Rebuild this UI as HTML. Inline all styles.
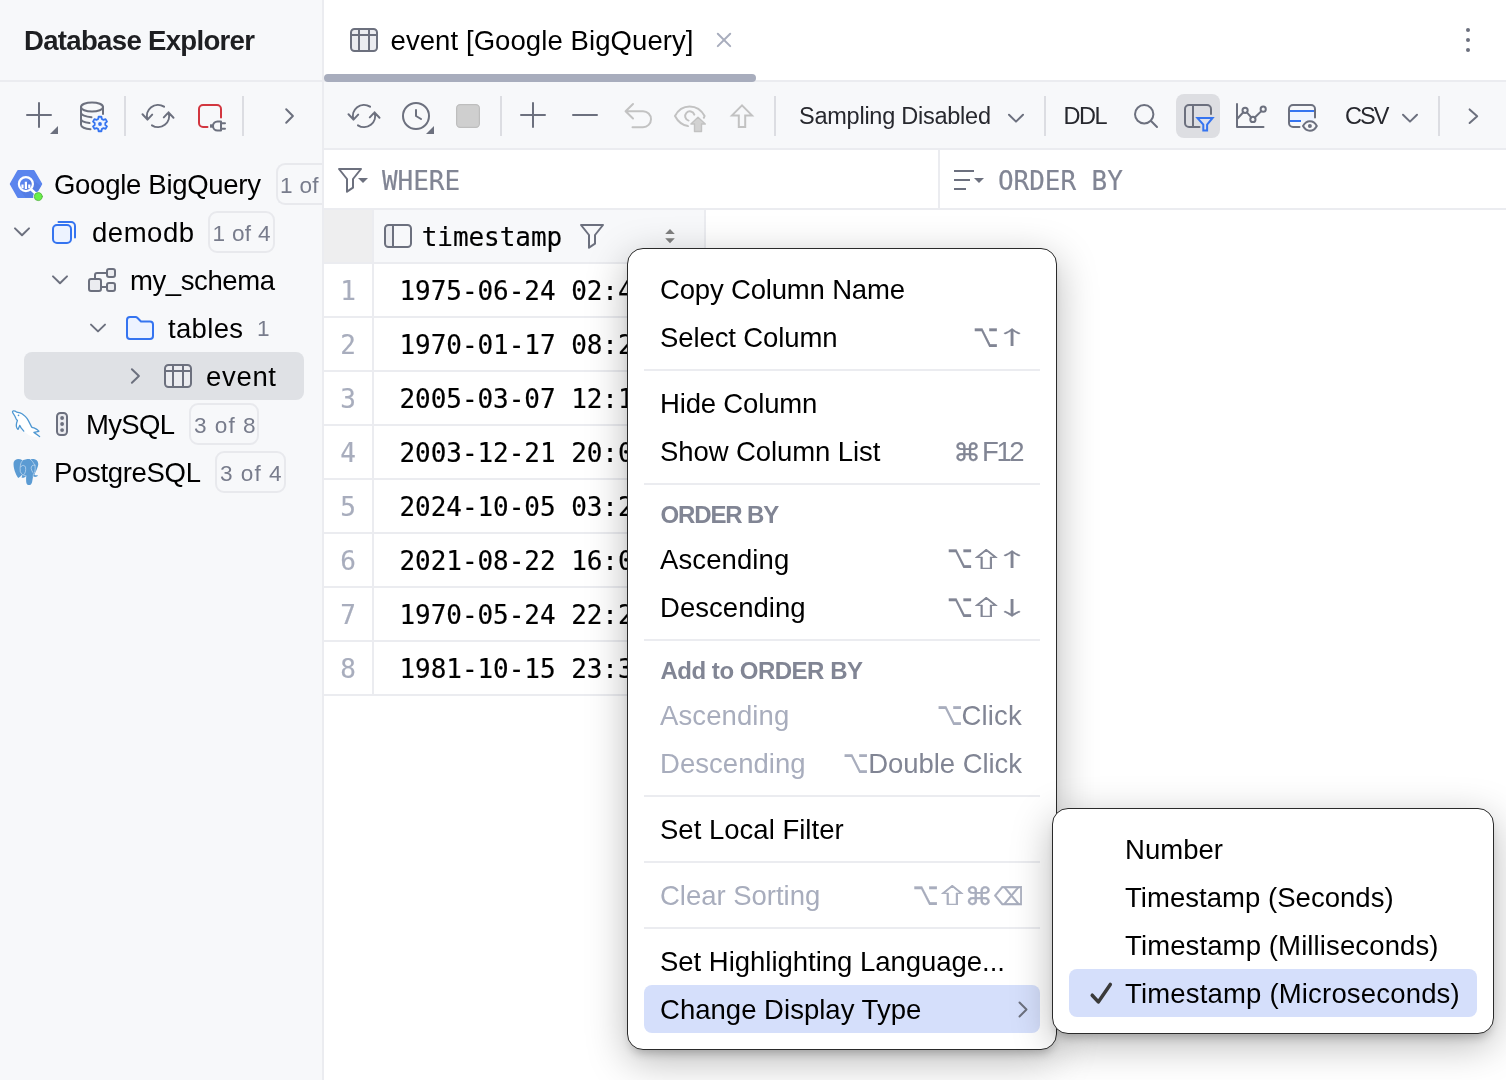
<!DOCTYPE html>
<html lang="en"><head><meta charset="utf-8"><title>Database Explorer</title>
<style>
*{box-sizing:border-box;margin:0;padding:0}
html,body{width:1506px;height:1080px;overflow:hidden;background:#fff}
body{font-family:"Liberation Sans","DejaVu Sans",sans-serif;font-size:27.5px;color:#000;position:relative;will-change:transform}
.a{position:absolute}
.t{position:absolute;white-space:nowrap;line-height:48px;height:48px;margin-top:1px}
.t.mono{margin-top:0}
.mono{font-family:"DejaVu Sans Mono","Liberation Mono",monospace;font-size:26px;letter-spacing:-0.05px;-webkit-text-stroke:0.18px currentColor}
.sym{font-family:"DejaVu Sans","Liberation Sans",sans-serif}
.gray{color:#818594}
.dis{color:#a8adbd}
.line{position:absolute;background:#ebecf0}
svg{position:absolute;left:0;top:0;overflow:visible}
.badge{position:absolute;height:42px;border:2px solid #e8e9ed;border-radius:9px}
.bt{position:absolute;white-space:nowrap;line-height:48px;height:48px;font-size:22.6px;color:#787c8c;margin-top:1px}
.menu{position:absolute;background:#fff;border:1px solid #2a2a2a;border-radius:16px}
.mi{position:absolute;left:32px;margin-top:1px;white-space:nowrap;line-height:48px;height:48px}
.sc{position:absolute;margin-top:1px;white-space:nowrap;line-height:48px;height:48px;text-align:right;color:#818594}
.hd{position:absolute;left:32.5px;margin-top:1px;white-space:nowrap;line-height:42px;height:42px;font-weight:bold;font-size:24px;color:#818594}
.sep{position:absolute;left:16px;height:2px;background:#ebecf0}
.hl{position:absolute;left:16px;height:48px;background:#d5dffb;border-radius:8px}

</style></head><body>
<!-- ===== left panel ===== -->
<div class="a" style="left:0;top:0;width:322px;height:1080px;background:#f7f8fa"></div>
<div class="line" style="left:322px;top:0;width:2px;height:1080px"></div>
<div class="line" style="left:0;top:80px;width:322px;height:2px"></div>
<div class="t" style="left:24px;top:16px;font-weight:bold;font-size:27.6px;color:#1e1f22"><span id="t_dbx" style="letter-spacing:-0.708px;">Database Explorer</span></div>

<!-- tree selection -->
<div class="a" style="left:24px;top:352px;width:280px;height:48px;border-radius:8px;background:#dfe1e5"></div>

<!-- tree text -->
<div class="t" style="left:54px;top:160px"><span id="t_gbq" style="letter-spacing:-0.283px;">Google BigQuery</span></div>
<div class="t" style="left:92px;top:208px"><span id="t_demodb" style="letter-spacing:0.522px;">demodb</span></div>
<div class="t" style="left:130px;top:256px"><span id="t_schema" style="letter-spacing:-0.406px;">my_schema</span></div>
<div class="t" style="left:168px;top:304px"><span id="t_tables" style="letter-spacing:0.322px;">tables</span></div>
<div class="bt" style="left:257px;top:304px">1</div>
<div class="t" style="left:206px;top:352px"><span id="t_event" style="letter-spacing:0.680px;">event</span></div>
<div class="t" style="left:86px;top:400px"><span id="t_mysql" style="letter-spacing:-0.672px;">MySQL</span></div>
<div class="t" style="left:54px;top:448px"><span id="t_pg" style="letter-spacing:-0.312px;">PostgreSQL</span></div>

<!-- badges -->
<div class="badge" style="left:276px;top:163px;width:46px;border-right:none;border-radius:9px 0 0 9px"></div>
<div class="bt" style="left:280px;top:161px;width:41px;overflow:hidden"><span id="b_1" style="letter-spacing:0.294px;">1 of 4</span></div>
<div class="badge" style="left:208px;top:211px;width:67px"></div>
<div class="bt" style="left:212.5px;top:209px"><span id="b_2" style="letter-spacing:0.294px;">1 of 4</span></div>
<div class="badge" style="left:189px;top:403px;width:70px"></div>
<div class="bt" style="left:194px;top:401px"><span id="b_3" style="letter-spacing:0.994px;">3 of 8</span></div>
<div class="badge" style="left:215px;top:451px;width:71px"></div>
<div class="bt" style="left:220px;top:449px"><span id="b_4" style="letter-spacing:0.994px;">3 of 4</span></div>

<!-- ===== right panel ===== -->
<div class="line" style="left:324px;top:80px;width:1182px;height:2px"></div>
<div class="a" style="left:324px;top:74px;width:432px;height:8px;border-radius:4px;background:#a8adbd"></div>
<div class="t" style="left:390.5px;top:16px"><span id="t_tab" style="letter-spacing:0.084px;">event [Google BigQuery]</span></div>

<!-- toolbar -->
<div class="a" style="left:324px;top:82px;width:1182px;height:66px;background:#f7f8fa"></div>
<div class="line" style="left:324px;top:148px;width:1182px;height:2px"></div>
<div class="a" style="left:1176px;top:94px;width:44px;height:44px;border-radius:8px;background:#dddee2"></div>
<div class="t" style="left:799px;top:91px;font-size:23.5px;color:#27282e"><span id="t_samp" style="letter-spacing:-0.247px;">Sampling Disabled</span></div>
<div class="t" style="left:1063.5px;top:91px;font-size:23.5px;color:#27282e"><span id="t_ddl" style="letter-spacing:-1.514px;">DDL</span></div>
<div class="t" style="left:1345px;top:91px;font-size:23.5px;color:#27282e"><span id="t_csv" style="letter-spacing:-1.912px;">CSV</span></div>

<!-- filter row -->
<div class="line" style="left:324px;top:208px;width:1182px;height:2px"></div>
<div class="line" style="left:938px;top:150px;width:2px;height:58px"></div>
<div class="t mono" style="left:382px;top:157px;color:#818594">WHERE</div>
<div class="t mono" style="left:998px;top:157px;color:#818594">ORDER BY</div>

<!-- table header -->
<div class="a" style="left:324px;top:210px;width:48px;height:52px;background:#eeeeef"></div>
<div class="a" style="left:374px;top:210px;width:330px;height:52px;background:#f7f8fa"></div>
<div class="line" style="left:324px;top:262px;width:380px;height:2px"></div>
<div class="line" style="left:372px;top:210px;width:2px;height:486px"></div>
<div class="line" style="left:704px;top:210px;width:2px;height:54px"></div>
<div class="t mono" style="left:421.7px;top:213px">timestamp</div>

<!-- rows -->
<div class="line" style="left:324px;top:316px;width:380px;height:2px"></div><div class="t mono" style="left:324px;width:48px;text-align:center;top:267px;color:#a8adbd">1</div><div class="t mono" style="left:399.5px;top:267px;width:304px;overflow:hidden">1975-06-24 02:45:10.123456</div><div class="line" style="left:324px;top:370px;width:380px;height:2px"></div><div class="t mono" style="left:324px;width:48px;text-align:center;top:321px;color:#a8adbd">2</div><div class="t mono" style="left:399.5px;top:321px;width:304px;overflow:hidden">1970-01-17 08:26:44.482915</div><div class="line" style="left:324px;top:424px;width:380px;height:2px"></div><div class="t mono" style="left:324px;width:48px;text-align:center;top:375px;color:#a8adbd">3</div><div class="t mono" style="left:399.5px;top:375px;width:304px;overflow:hidden">2005-03-07 12:18:31.907264</div><div class="line" style="left:324px;top:478px;width:380px;height:2px"></div><div class="t mono" style="left:324px;width:48px;text-align:center;top:429px;color:#a8adbd">4</div><div class="t mono" style="left:399.5px;top:429px;width:304px;overflow:hidden">2003-12-21 20:09:53.318047</div><div class="line" style="left:324px;top:532px;width:380px;height:2px"></div><div class="t mono" style="left:324px;width:48px;text-align:center;top:483px;color:#a8adbd">5</div><div class="t mono" style="left:399.5px;top:483px;width:304px;overflow:hidden">2024-10-05 03:27:19.650732</div><div class="line" style="left:324px;top:586px;width:380px;height:2px"></div><div class="t mono" style="left:324px;width:48px;text-align:center;top:537px;color:#a8adbd">6</div><div class="t mono" style="left:399.5px;top:537px;width:304px;overflow:hidden">2021-08-22 16:04:48.275190</div><div class="line" style="left:324px;top:640px;width:380px;height:2px"></div><div class="t mono" style="left:324px;width:48px;text-align:center;top:591px;color:#a8adbd">7</div><div class="t mono" style="left:399.5px;top:591px;width:304px;overflow:hidden">1970-05-24 22:21:06.839401</div><div class="line" style="left:324px;top:694px;width:380px;height:2px"></div><div class="t mono" style="left:324px;width:48px;text-align:center;top:645px;color:#a8adbd">8</div><div class="t mono" style="left:399.5px;top:645px;width:304px;overflow:hidden">1981-10-15 23:37:52.564823</div>

<!-- ===== base icons ===== -->
<svg width="1506" height="1080" viewBox="0 0 1506 1080" fill="none" stroke-linecap="round" stroke-linejoin="round" stroke-width="2">
<path stroke="#6c707e" d="M39 103V127M27 115H51"/><path d="M58 126V134H50Z" fill="#6c707e" stroke="none"/>
<ellipse cx="92" cy="107" rx="11" ry="4.6" stroke="#6c707e"/>
<path stroke="#6c707e" d="M81 107V124.8C81 127 85 129 90.5 129.3M81 112.7C81 114.8 85.5 116.8 91.5 117.2M81 118.8C81 120.8 84.5 122.6 89.5 123.1M103 107V114"/>
<path d="M98.24 118.89L98.59 116.74L101.41 116.74L101.76 118.89L103.54 119.92L105.58 119.15L107.00 121.59L105.30 122.97L105.30 125.03L107.00 126.41L105.58 128.85L103.54 128.08L101.76 129.11L101.41 131.26L98.59 131.26L98.24 129.11L96.46 128.08L94.42 128.85L93.00 126.41L94.70 125.03L94.70 122.97L93.00 121.59L94.42 119.15L96.46 119.92Z" stroke="#3574f0" stroke-width="1.8" fill="#edf3ff"/><circle cx="100" cy="124" r="1.9" fill="#3574f0" stroke="none"/>
<rect x="124" y="96" width="2" height="40" fill="#dcdde2" stroke="none"/>
<path stroke="#6c707e" d="M147.50 119.61A11.1 11.1 0 0 1 164.05 106.69M142.50 114.31L147.50 119.61L152.20 114.61M168.50 112.39A11.1 11.1 0 0 1 151.95 125.31M173.50 117.69L168.50 112.39L163.80 117.39"/>
<path stroke="#d2363f" d="M207.5 127H203a4 4 0 0 1-4-4V109a4 4 0 0 1 4-4H217a4 4 0 0 1 4 4V117.5"/>
<path stroke="#6c707e" d="M221 121.5h-3.5a4.5 4.5 0 0 0 0 9H221ZM222 123.2H225M222 128.8H225"/><path stroke="#6c707e" stroke-width="3.4" stroke-linecap="butt" d="M210 126H213.5"/>
<rect x="242" y="96" width="2" height="40" fill="#dcdde2" stroke="none"/>
<path stroke="#6c707e" d="M286.2 109.3L292.9 116L286.2 122.7"/>
<path d="M10.6 184L18 170.8H33.8L41.4 184L33.8 197.2H18Z" fill="#5b85ee" stroke="#5b85ee" stroke-width="1.6"/>
<path d="M30.5 178.5L41 186L34 197.6H25.5L21 191.5Z" fill="#4d74d6" opacity=".45" stroke="none"/>
<circle cx="25.9" cy="184.1" r="7" stroke="#fff" stroke-width="2.2"/><path d="M31 189.3L35 193" stroke="#fff" stroke-width="2.6"/>
<path d="M21.4 184.6h2.2v3.6h-2.2zM24.8 181.8h2.2v7.3h-2.2zM28.2 184.6h2.2v3.6h-2.2z" fill="#fff" stroke="none"/>
<circle cx="38.3" cy="196.6" r="5.2" fill="#f7f8fa" stroke="none"/><circle cx="38.3" cy="196.6" r="4" fill="#68f048" stroke="#5bb64a" stroke-width="0.9"/>
<path stroke="#6c707e" d="M15 228.4L22 235.2L29 228.4"/>
<path stroke="#3574f0" d="M58.5 222H71a4 4 0 0 1 4 4V237.5"/><rect x="53" y="225" width="18" height="18" rx="4" stroke="#3574f0" fill="#edf3ff"/>
<path stroke="#6c707e" d="M53 276.40000000000003L60 283.20000000000005L67 276.40000000000003"/>
<path stroke="#6c707e" d="M95 279V275a2 2 0 0 1 2-2H107M101 287H107"/>
<rect x="89" y="279" width="12" height="12" rx="2" stroke="#6c707e" fill="#ebecf0"/><rect x="107" y="269" width="8" height="8" rx="2" stroke="#6c707e" fill="#ebecf0"/><rect x="107" y="283" width="8" height="8" rx="2" stroke="#6c707e" fill="#ebecf0"/>
<path stroke="#6c707e" d="M91 324.6L98 331.40000000000003L105 324.6"/>
<path stroke="#3574f0" fill="#edf3ff" d="M127 320a3 3 0 0 1 3-3H135.6a2.5 2.5 0 0 1 1.7.7L141 321.5H150a3 3 0 0 1 3 3V336a3 3 0 0 1-3 3H130a3 3 0 0 1-3-3Z"/>
<path stroke="#6c707e" d="M131.9 369.2L138.9 376L131.9 382.8"/>
<rect x="165" y="365" width="26" height="22" rx="3.5" stroke="#6c707e" fill="#ebecf0"/><path stroke="#6c707e" d="M165 371H191M173 365V387M183 365V387"/>
<path d="M12.3 411.7C12.6 410.3 14.2 410 16.9 412.2C18 412.6 19 412.6 20.1 412.8C21.5 413.3 22.6 414 23.6 414.9C24.6 415.7 25.6 416.6 26.4 417.7C27.2 418.7 27.9 419.8 28.5 420.9L30.3 424.4L31.7 427.1C32.8 427.6 33.8 427.9 34.9 428.3C36 428.8 36.9 429.4 37.7 430.1L38.9 431.3L33.8 432.5L39.8 436.7C36 437 33 436.6 30.6 435.9C28 434.8 26 433.2 24 431.3L21.1 427.9L19.7 425.5L18 429.4C17 428.6 16.5 427.5 16.4 426.5C16.2 425.3 16.4 424 16.6 423L17.4 420.5L16.2 419.1L14.8 416L12.7 412.6Z" fill="#fff" stroke="none"/>
<path d="M23.8 431.1L21.1 427.9L19.7 425.4L18 429.4C17 428.6 16.5 427.5 16.4 426.5C16.2 425.3 16.4 424 16.6 423L17.4 420.5L16.2 419.1L14.8 416L12.7 412.6C12 411 13.6 409.8 16.9 412.2C18 412.6 19 412.6 20.1 412.8C21.5 413.3 22.6 414 23.6 414.9C24.6 415.7 25.6 416.6 26.4 417.7C27.2 418.7 27.9 419.8 28.5 420.9L30.3 424.4L31.7 427.1C32.8 427.6 33.8 427.9 34.9 428.3C36 428.8 36.9 429.4 37.7 430.1L38.9 431.3L33.9 432.4L39.6 436.5" fill="none" stroke="#4f98d2" stroke-width="1.3"/><circle cx="18.5" cy="415.4" r="0.8" fill="#4f98d2" stroke="none"/>
<rect x="57" y="413" width="10" height="22" rx="3.5" stroke="#6c707e" fill="#ebecf0"/><circle cx="62.1" cy="418" r="1.9" fill="#6c707e" stroke="none"/><circle cx="62.1" cy="424" r="1.9" fill="#6c707e" stroke="none"/><circle cx="62.1" cy="430.1" r="1.9" fill="#6c707e" stroke="none"/>
<path d="M18 459C15.2 459.2 13.4 461 13.5 464C13.6 467.4 14.4 470.4 15.5 473.1C16.3 475.2 17.2 477 18.3 477.9C19.8 477.3 21 475.9 22.2 474.6C22.4 475.6 22.1 476.6 21.5 477.5C22.6 477.8 23.6 477.7 24.3 477.4C25.1 477 25.7 476.5 26.2 476C26.1 478 26 480 26.2 481.9C26.5 484 27.6 485.1 29.1 485.1C30.7 485 31.7 483.7 32.1 481.9C32.6 480 32.7 478 33.1 476.3C34.2 476.9 35.3 477 36.3 476.8C37.1 476.5 37.7 475.9 38 475.2C36.8 475.5 35.5 475.4 34.4 474.8C34.8 474.2 35 473.5 35.2 472.8C36.3 471 37.2 468.9 37.7 466.8C38.1 465.4 38.4 464.4 38.2 463.4C37.9 460.9 36 459.3 33.8 459.1C32.7 459 31.6 459.1 30.6 459.4C29.2 458.9 27.8 458.9 26.4 459.2C25 459.4 23.7 459.8 22.5 460.3C21.1 459.5 19.6 459 18 459Z" fill="#5b9bd3" stroke="none"/>
<path d="M22.6 460.4C21.3 461.8 20.6 463.5 20.4 465.4C20.1 467.5 20 469.7 20.3 471.7C20.8 472.9 21.6 473.8 22.5 474.5C23.6 475.3 24.9 475.8 26.1 475.9M20.8 466.8C21.5 465.9 22.3 465.4 23.3 465.4C24.5 465.5 25.2 466.2 25.5 467.1C25.8 468.7 25.7 470.2 25.4 471.7C25.1 472.8 24.6 473.7 24 474.5M30.5 459.5C31.9 460.6 33 462 33.8 463.6C34.4 464.1 34.8 464.7 35 465.4C35.3 467.5 35.3 469.6 34.9 471.7C34.6 472.7 34.1 473.5 33.5 474.2C33.3 475 33.2 475.7 33.1 476.3M34.9 465.2C33.9 465 32.9 465.2 32.1 465.7C31.4 466.5 31.1 467.5 31.2 468.5C31.5 470 32.1 471.3 32.8 472.4" stroke="#e8f1fa" stroke-width="0.55" fill="none"/>
<rect x="351" y="29" width="26" height="22" rx="3.5" stroke="#6c707e" fill="#ebecf0"/><path stroke="#6c707e" d="M351 35H377M359 29V51M369 29V51"/>
<path stroke="#a8adbd" stroke-width="2" d="M717.8 33.7L730.2 46.1M730.2 33.7L717.8 46.1"/>
<circle cx="1468" cy="30" r="2" fill="#6c707e" stroke="none"/>
<circle cx="1468" cy="40" r="2" fill="#6c707e" stroke="none"/>
<circle cx="1468" cy="50" r="2" fill="#6c707e" stroke="none"/>
<path stroke="#6c707e" d="M353.50 119.61A11.1 11.1 0 0 1 370.05 106.69M348.50 114.31L353.50 119.61L358.20 114.61M374.50 112.39A11.1 11.1 0 0 1 357.95 125.31M379.50 117.69L374.50 112.39L369.80 117.39"/>
<circle cx="416" cy="116" r="13" stroke="#6c707e"/><path stroke="#6c707e" d="M416 110V116L421 119"/><path d="M434 126V134H426Z" fill="#6c707e" stroke="none"/>
<rect x="456.6" y="104.6" width="22.8" height="22.8" rx="3.6" fill="#cfcfcf" stroke="#bebebe" stroke-width="1.2"/>
<rect x="500" y="96" width="2" height="40" fill="#dcdde2" stroke="none"/>
<path stroke="#6c707e" d="M533 103V127M521 115H545M573 115H597"/>
<path stroke="#c2c2c2" d="M633 104L625.6 111.2L633 118.5M626 111.2H643a8 8 0 0 1 0 16H632.5"/>
<path stroke="#c2c2c2" d="M675 116C678.2 109.6 683.6 106.4 689.7 106.4C695.8 106.4 701.2 109.6 704.6 116C704.2 117.2 703.6 118.2 703 119M675 116C678 121.8 682.6 125.2 688 126M694.3 114.6A4.7 4.7 0 1 0 688.6 120.6"/>
<path d="M698 116.7L706 124H701.7V131.9H694.3V124H690.4Z" fill="#d2d2d2" stroke="#f7f8fa" stroke-width="4.5"/><path d="M698 117.2L705.3 124H701.5V131.5H694.5V124H690.9Z" fill="#d2d2d2" stroke="#c2c2c2" stroke-width="1.4"/>
<path stroke="#c2c2c2" stroke-linejoin="miter" d="M742 105.4L732 115.4H738.8V127H745.2V115.4H752Z"/>
<rect x="774" y="96" width="2" height="40" fill="#dcdde2" stroke="none"/>
<path stroke="#6c707e" d="M1009 114.8L1016 121.6L1023 114.8"/>
<rect x="1044" y="96" width="2" height="40" fill="#dcdde2" stroke="none"/>
<circle cx="1144.2" cy="114.3" r="9.2" stroke="#6c707e"/><path stroke="#6c707e" d="M1151.3 121.3L1157 127"/>
<path stroke="#6c707e" d="M1199.5 127H1189a4 4 0 0 1-4-4V109a4 4 0 0 1 4-4H1207a4 4 0 0 1 4 4V114M1193 105V127"/>
<path stroke="#3574f0" fill="#dde1ee" stroke-linejoin="miter" d="M1197.4 117.9H1212.6L1207.1 124.6V130.4H1203.3V124.6Z"/>
<path stroke="#6c707e" d="M1237 104V127H1263.5M1237.3 118.8L1243.3 112.3M1246.9 112.4L1251.2 117.4M1254.8 117.5L1261.3 111.1"/><circle cx="1245.1" cy="110.3" r="2.6" stroke="#6c707e"/><circle cx="1252.9" cy="119.4" r="2.6" stroke="#6c707e"/><circle cx="1263.2" cy="109.2" r="2.6" stroke="#6c707e"/>
<rect x="1290" y="111" width="24" height="10" fill="#edf3ff" stroke="none"/><path stroke="#3574f0" stroke-linecap="butt" d="M1290 111H1314M1290 121H1301"/>
<path stroke="#6c707e" d="M1299.5 127H1293a4 4 0 0 1-4-4V109a4 4 0 0 1 4-4H1311a4 4 0 0 1 4 4V117.5"/>
<path stroke="#6c707e" fill="#f7f8fa" d="M1303 126C1305 122.6 1307.4 121.3 1309.9 121.3C1312.5 121.3 1315 122.6 1316.8 126C1315 129.4 1312.5 130.7 1309.9 130.7C1307.4 130.7 1305 129.4 1303 126Z"/><circle cx="1309.9" cy="126" r="2" fill="#6c707e" stroke="none"/>
<path stroke="#6c707e" d="M1403 114.8L1410 121.6L1417 114.8"/>
<rect x="1438" y="96" width="2" height="40" fill="#dcdde2" stroke="none"/>
<path stroke="#6c707e" d="M1469.6 109.4L1477.2 116.2L1469.6 123"/>
<path transform="translate(0 0)" stroke="#6c707e" stroke-linejoin="round" d="M339 169H361L353 179V187.7L347 191.7V179Z"/>
<path d="M358 178H368L363 183Z" fill="#6c707e" stroke="none"/>
<path stroke="#6c707e" stroke-linecap="butt" d="M954 171H974M954 180H970M954 189H966"/><path d="M974 178H984L979 183Z" fill="#6c707e" stroke="none"/>
<path d="M385 228.5a3.5 3.5 0 0 1 3.5-3.5H393V247H388.5a3.5 3.5 0 0 1-3.5-3.5Z" fill="#ebecf0" stroke="none"/><rect x="385" y="225" width="26" height="22" rx="3.5" stroke="#6c707e"/><path stroke="#6c707e" d="M393 225V247"/>
<path transform="translate(242 56)" stroke="#6c707e" stroke-linejoin="round" d="M339 169H361L353 179V187.7L347 191.7V179Z"/>
<path d="M670 229L674.8 234H665.2ZM665.2 238.3H674.8L670 243.3Z" fill="#7f7f7f" stroke="none"/>
</svg>

<!-- ===== context menu ===== -->
<div class="menu" id="menu1" style="left:627px;top:248px;width:430px;height:802px;box-shadow:0 11px 40px rgba(0,0,0,.28),0 7px 10px -4px rgba(0,0,0,.22)">
<div class="mi" style="top:16px"><span id="m_copy" style="letter-spacing:-0.173px;">Copy Column Name</span></div>
<div class="mi" style="top:64px"><span id="m_sel" style="letter-spacing:-0.103px;">Select Column</span></div>
<div class="sep" style="top:120px;width:396px"></div>
<div class="mi" style="top:130px"><span id="m_hide" style="letter-spacing:-0.167px;">Hide Column</span></div>
<div class="mi" style="top:178px"><span id="m_show" style="letter-spacing:-0.088px;">Show Column List</span></div>
<div class="sc" style="right:34px;top:178px"><span id="s_f12" style="letter-spacing:-2.494px;">F12</span></div>
<div class="sep" style="top:234px;width:396px"></div>
<div class="hd" style="top:244px"><span id="h_order" style="letter-spacing:-1.127px;">ORDER BY</span></div>
<div class="mi" style="top:286px"><span id="m_asc" style="letter-spacing:0.097px;">Ascending</span></div>
<div class="mi" style="top:334px"><span id="m_desc" style="letter-spacing:0.041px;">Descending</span></div>
<div class="sep" style="top:390px;width:396px"></div>
<div class="hd" style="top:400px"><span id="h_add" style="letter-spacing:-0.487px;">Add to ORDER BY</span></div>
<div class="mi dis" style="top:442px"><span id="m_asc2" style="letter-spacing:0.097px;">Ascending</span></div>
<div class="sc dis" style="right:34px;top:442px"><span id="s_click" style="letter-spacing:0.203px;">Click</span></div>
<div class="mi dis" style="top:490px"><span id="m_desc2" style="letter-spacing:0.041px;">Descending</span></div>
<div class="sc dis" style="right:34px;top:490px"><span id="s_dbl" style="letter-spacing:-0.043px;">Double Click</span></div>
<div class="sep" style="top:546px;width:396px"></div>
<div class="mi" style="top:556px"><span id="m_filter" style="letter-spacing:0.012px;">Set Local Filter</span></div>
<div class="sep" style="top:612px;width:396px"></div>
<div class="mi dis" style="top:622px"><span id="m_clear" style="letter-spacing:-0.017px;">Clear Sorting</span></div>
<div class="sep" style="top:678px;width:396px"></div>
<div class="mi" style="top:688px"><span id="m_lang" style="letter-spacing:-0.020px;">Set Highlighting Language...</span></div>
<div class="hl" style="top:736px;width:396px"></div>
<div class="mi" style="top:736px"><span id="m_change" style="letter-spacing:0.022px;">Change Display Type</span></div>
<svg width="430" height="802" viewBox="628 249 430 802" fill="none" stroke-linecap="round" stroke-linejoin="round" stroke-width="2"><path stroke="#6c707e" d="M1019.5 1002.5L1026.5 1009.5L1019.5 1016.5"/>
<text transform="translate(972.93 346.60) scale(0.917 1.341)" font-family="DejaVu Sans, Liberation Sans, sans-serif" font-size="24" fill="#818594" stroke="#818594" stroke-width="0.12">⌥</text><text transform="translate(994.60 345.26) scale(1.466 0.802)" font-family="Noto Sans CJK JP, DejaVu Sans, sans-serif" font-size="24" fill="#818594" stroke="#818594" stroke-width="0.18">↑</text>
<text transform="translate(953.36 461.00) scale(1.149 1.021)" font-family="DejaVu Sans, Liberation Sans, sans-serif" font-size="24" fill="#818594" stroke="#818594" stroke-width="0.3">⌘</text>
<text transform="translate(947.01 568.30) scale(0.925 1.341)" font-family="DejaVu Sans, Liberation Sans, sans-serif" font-size="24" fill="#818594" stroke="#818594" stroke-width="0.12">⌥</text><text transform="translate(970.49 566.75) scale(1.314 0.865)" font-family="Noto Sans CJK JP, DejaVu Sans, sans-serif" font-size="24" fill="#818594" stroke="#818594" stroke-width="0.7">⇧</text><text transform="translate(994.60 566.86) scale(1.466 0.802)" font-family="Noto Sans CJK JP, DejaVu Sans, sans-serif" font-size="24" fill="#818594" stroke="#818594" stroke-width="0.18">↑</text>
<text transform="translate(947.01 616.50) scale(0.925 1.341)" font-family="DejaVu Sans, Liberation Sans, sans-serif" font-size="24" fill="#818594" stroke="#818594" stroke-width="0.12">⌥</text><text transform="translate(970.49 614.95) scale(1.314 0.865)" font-family="Noto Sans CJK JP, DejaVu Sans, sans-serif" font-size="24" fill="#818594" stroke="#818594" stroke-width="0.7">⇧</text><text transform="translate(994.60 614.96) scale(1.466 0.802)" font-family="Noto Sans CJK JP, DejaVu Sans, sans-serif" font-size="24" fill="#818594" stroke="#818594" stroke-width="0.18">↓</text>
<text transform="translate(936.91 724.60) scale(0.925 1.355)" font-family="DejaVu Sans, Liberation Sans, sans-serif" font-size="24" fill="#a8adbd" stroke="#a8adbd" stroke-width="0.12">⌥</text>
<text transform="translate(843.01 772.80) scale(0.925 1.362)" font-family="DejaVu Sans, Liberation Sans, sans-serif" font-size="24" fill="#a8adbd" stroke="#a8adbd" stroke-width="0.12">⌥</text>
<text transform="translate(912.59 904.90) scale(0.938 1.341)" font-family="DejaVu Sans, Liberation Sans, sans-serif" font-size="24" fill="#a8adbd" stroke="#a8adbd" stroke-width="0.12">⌥</text><text transform="translate(936.86 903.45) scale(1.295 0.861)" font-family="Noto Sans CJK JP, DejaVu Sans, sans-serif" font-size="24" fill="#a8adbd" stroke="#a8adbd" stroke-width="0.7">⇧</text><text transform="translate(964.55 904.90) scale(1.187 1.027)" font-family="DejaVu Sans, Liberation Sans, sans-serif" font-size="24" fill="#a8adbd" stroke="#a8adbd" stroke-width="0.3">⌘</text><text transform="translate(994.20 904.90) scale(0.863 1.036)" font-family="DejaVu Sans, Liberation Sans, sans-serif" font-size="24" fill="#a8adbd" stroke="#a8adbd" stroke-width="0.45">⌫</text>
</svg>
</div>

<!-- ===== submenu ===== -->
<div class="menu" id="menu2" style="left:1052px;top:808px;width:442px;height:226px;box-shadow:0 11px 40px rgba(0,0,0,.28),0 7px 10px -4px rgba(0,0,0,.22)">
<div class="mi" style="left:72px;top:16px"><span id="u_num" style="letter-spacing:0.037px;">Number</span></div>
<div class="mi" style="left:72px;top:64px"><span id="u_sec" style="letter-spacing:0.036px;">Timestamp (Seconds)</span></div>
<div class="mi" style="left:72px;top:112px"><span id="u_ms" style="letter-spacing:0.121px;">Timestamp (Milliseconds)</span></div>
<div class="hl" style="top:160px;width:408px"></div>
<div class="mi" style="left:72px;top:160px"><span id="u_us" style="letter-spacing:0.179px;">Timestamp (Microseconds)</span></div>
<svg width="442" height="226" viewBox="1053 809 442 226" fill="none" stroke-linecap="round" stroke-linejoin="round"><path stroke="#3a3a3a" stroke-width="3.5" stroke-linecap="round" stroke-linejoin="round" d="M1092.2 995.2L1098.3 1001.9L1110.3 984.4"/></svg>
</div>

</body></html>
